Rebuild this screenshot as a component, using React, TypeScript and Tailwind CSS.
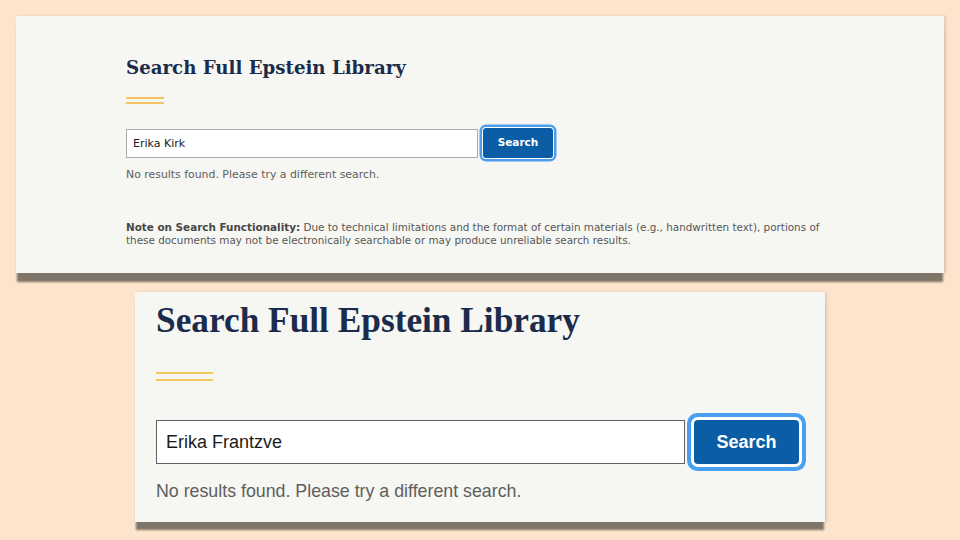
const navy = "text-[#1b2b4b]";

// wide screenshot on top
function WideCard() {
  return (
    <div className="ml-4 w-[928px] h-[257px] bg-[#f6f6f2] shadow-[0_10px_2px_-1px_#7f7468,2px_0_3px_rgba(0,0,0,0.12)] pl-[110px] pt-[40px]">
      <h2 className={`font-['DejaVu_Serif',serif] font-bold text-[18.2px] leading-[24px] ${navy}`}>
        Search Full Epstein Library
      </h2>

      {/* gold double rule */}
      <div className="mt-[17px] w-[38px] flex flex-col gap-[3px]">
        <div className="h-[2px] bg-[#f5c363]" />
        <div className="h-[2px] bg-[#f5c363]" />
      </div>

      <div className="mt-[24px] flex items-center">
        <input
          readOnly
          value="Erika Kirk"
          className="w-[352px] h-[29px] border border-[#a9acaf] bg-white px-[6px] font-['DejaVu_Sans',sans-serif] text-[11px] font-medium text-[#1b1b1b] outline-none"
        />
        <button className="ml-[5px] w-[70px] h-[30px] rounded-[3px] bg-[#0b5ea6] ring-[2.5px] ring-[#4b9ff0] ring-offset-1 ring-offset-white font-['DejaVu_Sans',sans-serif] text-[10.5px] font-bold text-white">
          Search
        </button>
      </div>

      <p className="mt-[10px] font-['DejaVu_Sans',sans-serif] text-[10.9px] leading-[14px] text-[#5e5e5e]">
        No results found. Please try a different search.
      </p>

      <p className="mt-[39px] font-['DejaVu_Sans',sans-serif] text-[10.4px] leading-[12.5px] text-[#565656] whitespace-nowrap">
        <span className="font-bold text-[#474747]">Note on Search Functionality:</span> Due to technical
        limitations and the format of certain materials (e.g., handwritten text), portions of
        <br />
        these documents may not be electronically searchable or may produce unreliable search results.
      </p>
    </div>
  );
}

// zoomed-in screenshot below
function CloseCard() {
  return (
    <div className="mt-[19px] ml-[135px] w-[690px] h-[230px] bg-[#f6f6f2] shadow-[0_9px_2px_-1px_#7f7468,2px_0_3px_rgba(0,0,0,0.12)] pl-[21px] pt-[9px]">
      <h2 className={`font-['Liberation_Serif',serif] font-bold text-[35.3px] leading-[40px] ${navy}`}>
        Search Full Epstein Library
      </h2>

      <div className="mt-[31px] w-[57px] flex flex-col gap-[5px]">
        <div className="h-[2px] bg-[#f5c85e]" />
        <div className="h-[2px] bg-[#f5c85e]" />
      </div>

      <div className="mt-[39px] flex items-center">
        <input
          readOnly
          value="Erika Frantzve"
          className="w-[529px] h-[44px] border border-[#5f6368] bg-white px-[9px] font-['Liberation_Sans',sans-serif] text-[18px] text-[#1b1b1b] outline-none"
        />
        <button className="ml-[9px] w-[105px] h-[44px] rounded-[4px] bg-[#0b5ea6] ring-4 ring-[#4b9ff0] ring-offset-[3px] ring-offset-white font-['Liberation_Sans',sans-serif] text-[18px] font-bold text-white">
          Search
        </button>
      </div>

      <p className="mt-[15px] font-['Liberation_Sans',sans-serif] text-[17.8px] leading-[24px] text-[#5e5e5e]">
        No results found. Please try a different search.
      </p>
    </div>
  );
}

export default function App() {
  return (
    <div className="w-[960px] h-[540px] overflow-hidden bg-[#fde4cc] pt-4 flex flex-col">
      <WideCard />
      <CloseCard />
    </div>
  );
}
